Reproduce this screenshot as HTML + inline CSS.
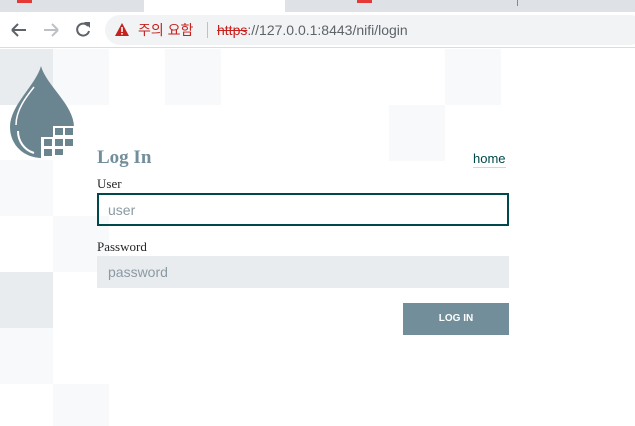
<!DOCTYPE html>
<html><head><meta charset="utf-8"><style>
*{margin:0;padding:0;box-sizing:border-box}
body{width:635px;height:426px;overflow:hidden;background:#fff;font-family:"Liberation Sans",sans-serif;position:relative}
.a{position:absolute}
.sq{position:absolute;width:56px;height:56px;background:#f8f9fa}
.dk{background:#e8ecef}
</style></head><body>
<div class="a" style="left:0;top:0;width:635px;height:12px;background:#dee1e6"></div>
<div class="a" style="left:144px;top:0;width:141px;height:12px;background:#fff"></div>
<div class="a" style="left:0;top:0;width:144px;height:12px;background:#dee1e6;border-radius:0 0 8px 0"></div>
<div class="a" style="left:285px;top:0;width:350px;height:12px;background:#dee1e6;border-radius:0 0 0 8px"></div>
<div class="a" style="left:17px;top:0;width:15px;height:3px;background:#e53935"></div>
<div class="a" style="left:357px;top:0;width:15px;height:3px;background:#e53935"></div>
<div class="a" style="left:517px;top:0;width:1px;height:6px;background:#888"></div>
<div class="a" style="left:0;top:12px;width:635px;height:36px;background:#fff;border-bottom:1px solid #dadce0"></div>
<svg class="a" style="left:8px;top:20px" width="90" height="20" viewBox="0 0 90 20">
<path d="M4 10H18M4 10L10 4M4 10L10 16" stroke="#5f6368" stroke-width="2" fill="none"/>
<path d="M36 10H50M50 10L44 4M50 10L44 16" stroke="#bdc1c6" stroke-width="2" fill="none"/>
<path d="M80 6 A6 6 0 1 0 81 11" stroke="#5f6368" stroke-width="2" fill="none"/>
<path d="M76 2L82 2L82 8Z" fill="#5f6368"/>
</svg>
<div class="a" style="left:105px;top:15px;width:540px;height:30px;background:#f1f3f4;border-radius:15px"></div>
<svg class="a" style="left:114px;top:22px" width="16" height="15"><path d="M8 1L15 14H1Z" fill="#c5221f"/><rect x="7.2" y="5" width="1.6" height="5" fill="#fff"/><rect x="7.2" y="11" width="1.6" height="1.6" fill="#fff"/></svg>
<div class="a" style="left:138px;top:20px;font-size:14px;color:#c5221f;font-family:'Liberation Sans','Noto Sans CJK KR',sans-serif;line-height:20px">주의 요함</div>
<div class="a" style="left:207px;top:22px;width:1px;height:16px;background:#bdc1c6"></div>
<div class="a" style="left:217px;top:20px;font-size:14px;line-height:20px;color:#5f6368"><span style="color:#c5221f;text-decoration:line-through">https</span>://127.0.0.1:8443/nifi/login</div>

<div class="sq dk" style="left:0;top:49px;width:53px"></div>
<div class="sq" style="left:53px;top:49px"></div>
<div class="sq" style="left:165px;top:49px"></div>
<div class="sq" style="left:445px;top:49px"></div>
<div class="sq" style="left:389px;top:105px"></div>
<div class="sq" style="left:0;top:160px;width:53px"></div>
<div class="sq" style="left:53px;top:216px"></div>
<div class="sq dk" style="left:0;top:272px;width:53px"></div>
<div class="sq" style="left:0;top:328px;width:53px"></div>
<div class="sq" style="left:53px;top:384px;height:42px"></div>

<svg class="a" style="left:8px;top:65px" width="70" height="95" viewBox="0 0 70 95">
<path d="M33 1 C28 20 2 40 2 62 C2 80 16 93 34 93 C52 93 66 80 66 62 C66 40 38 20 33 1Z" fill="#6b8590"/>
<path d="M8 60 C8 45 18 32 26 22" stroke="#fff" stroke-width="1.5" fill="none"/>
<path d="M10 66 C10 76 16 85 26 88" stroke="#fff" stroke-width="2" fill="none"/>
<rect x="45" y="61" width="25" height="40" fill="#fff"/>
<rect x="33" y="72" width="14" height="30" fill="#fff"/>
<g fill="#6b8590">
<rect x="47" y="63" width="8" height="7"/><rect x="57" y="63" width="8" height="7"/>
<rect x="36" y="74" width="8" height="7"/><rect x="47" y="74" width="8" height="7"/><rect x="57" y="74" width="8" height="7"/>
<rect x="36" y="84" width="8" height="7"/><rect x="47" y="84" width="8" height="6"/>
</g>
</svg>

<div class="a" style="left:97px;top:147px;font-family:'Liberation Serif',serif;font-weight:bold;font-size:19px;color:#728e9b">Log In</div>
<div class="a" style="left:473px;top:151px;font-size:13px;color:#004849;border-bottom:1px solid #cfd8dc;line-height:16px">home</div>
<div class="a" style="left:97px;top:176px;font-family:'Liberation Serif',serif;font-size:13px;color:#262626">User</div>
<div class="a" style="left:97px;top:193px;width:412px;height:33px;border:2px solid #004849;font-size:14px;color:#8a9aa3;padding:7px 9px">user</div>
<div class="a" style="left:97px;top:239px;font-family:'Liberation Serif',serif;font-size:13px;color:#262626">Password</div>
<div class="a" style="left:97px;top:256px;width:412px;height:32px;background:#e9ecef;font-size:14px;color:#8a9aa3;padding:8px 11px">password</div>
<div class="a" style="left:403px;top:303px;width:106px;height:32px;background:#728e9b;color:#fff;font-size:10px;font-weight:bold;text-align:center;line-height:32px">LOG IN</div>
</body></html>
